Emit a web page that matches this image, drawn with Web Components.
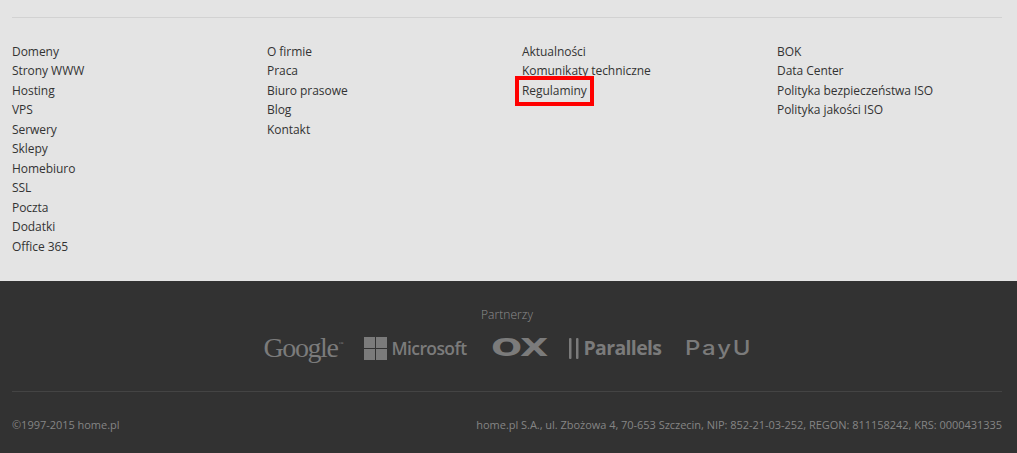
<!DOCTYPE html>
<html lang="pl"><head><meta charset="utf-8"><title>home.pl</title>
<style>html,body{margin:0;padding:0;background:#e4e4e4;font-family:"Open Sans","Liberation Sans",sans-serif;}</style>
</head><body>
<site-sitemap>
  <link-column><a>Domeny</a><a>Strony WWW</a><a>Hosting</a><a>VPS</a><a>Serwery</a><a>Sklepy</a><a>Homebiuro</a><a>SSL</a><a>Poczta</a><a>Dodatki</a><a>Office 365</a></link-column>
  <link-column><a>O firmie</a><a>Praca</a><a>Biuro prasowe</a><a>Blog</a><a>Kontakt</a></link-column>
  <link-column><a>Aktualności</a><a>Komunikaty techniczne</a><a class="hl">Regulaminy</a></link-column>
  <link-column><a>BOK</a><a>Data Center</a><a>Polityka bezpieczeństwa ISO</a><a>Polityka jakości ISO</a></link-column>
</site-sitemap>
<site-footer>
  <span slot="copy">©1997-2015 home.pl</span>
  <span slot="info">home.pl S.A., ul. Zbożowa 4, 70-653 Szczecin, NIP: 852-21-03-252, REGON: 811158242, KRS: 0000431335</span>
</site-footer>
<script>
class SiteSitemap extends HTMLElement{constructor(){super();this.attachShadow({mode:'open'}).innerHTML=`
<style>
:host{display:block;box-sizing:border-box;height:281px;padding:17px 15px 0 12px;background:#e4e4e4}
.rule{height:1px;background:#d2d2d2}
.cols{display:grid;grid-template-columns:255px 255px 255px 1fr;padding-top:23.6px}
</style><div class="rule"></div><div class="cols"><slot></slot></div>`;}}
class LinkColumn extends HTMLElement{constructor(){super();
const s=this.attachShadow({mode:'open'});
s.innerHTML=`<style>
:host{display:flex;flex-direction:column;align-items:flex-start;font:12px/19.5px "Open Sans","Liberation Sans",sans-serif;letter-spacing:-.05px;color:#333}
a{display:block;position:relative;white-space:nowrap}
a.hl::after{content:"";position:absolute;left:-7px;right:-7px;top:-5px;bottom:-5.5px;border:4px solid #f00;box-sizing:border-box}
</style>`;
[...this.children].forEach(c=>{const a=document.createElement('a');a.textContent=c.textContent;a.className=c.className;s.appendChild(a);});
}}
class PartnerLogos extends HTMLElement{constructor(){super();this.attachShadow({mode:'open'}).innerHTML=`
<style>
:host{display:flex;align-items:center;justify-content:center;height:40px;padding-right:2px;color:#7b7b7b;white-space:nowrap}
.item{display:flex;align-items:center;flex:none}
.google{font:28px/40px "Liberation Serif",serif;letter-spacing:-1.4px;width:79px;margin-right:21px}
.google sup{font-size:5px;line-height:1;align-self:flex-start;margin-top:13px;margin-left:1px;letter-spacing:0}
.ms{width:103px;margin-right:24px;gap:5px}
.ms span{font:600 17.5px/40px "Open Sans",sans-serif;letter-spacing:-.6px}
.ms svg{display:block}
.ox{font:900 36px/40px "DejaVu Sans",sans-serif;margin-right:22px;width:56px;letter-spacing:-1px}
.ox i{display:inline-block;font-style:normal;transform:scale(1.02,.68);transform-origin:left center}
.par{width:93px;margin-right:23px;gap:5px}
.par span{font:700 19.5px/40px "Open Sans",sans-serif;letter-spacing:-.65px}
.par svg{display:block}
.payu{font:500 20px/40px "Inter",sans-serif;width:64px}
.payu i{display:inline-block;font-style:normal;letter-spacing:1.5px;transform:scaleX(1.2);transform-origin:left center}
</style>
<div class="item google">Google<sup>™</sup></div>
<div class="item ms"><svg width="23" height="23" viewBox="0 0 23 23" fill="#7b7b7b"><rect width="11" height="11"/><rect x="12" width="11" height="11"/><rect y="12" width="11" height="11"/><rect x="12" y="12" width="11" height="11"/></svg><span>Microsoft</span></div>
<div class="item ox"><i>OX</i></div>
<div class="item par"><svg width="10" height="21" viewBox="0 0 10 21" fill="#7b7b7b"><rect width="2.5" height="21" rx="1"/><rect x="7" width="2.5" height="21" rx="1"/></svg><span>Parallels</span></div>
<div class="item payu"><i>PayU</i></div>`;}}
class SiteFooter extends HTMLElement{constructor(){super();this.attachShadow({mode:'open'}).innerHTML=`
<style>
:host{display:block;box-sizing:border-box;height:172px;background:#323232;padding:25px 15px 0 12px;font:11px/18px "Open Sans","Liberation Sans",sans-serif;color:#858585;letter-spacing:-.03px}
.title{text-align:center;height:18px;font-size:12px;font-weight:300;color:#8f8f8f;letter-spacing:.05px}
partner-logos{margin-top:4px}
.rule{height:1px;background:#444;margin-top:23px}
.bottom{display:flex;justify-content:space-between;padding-top:24px}
</style>
<div class="title">Partnerzy</div>
<partner-logos></partner-logos>
<div class="rule"></div>
<div class="bottom"><slot name="copy"></slot><slot name="info"></slot></div>`;}}
customElements.define('link-column',LinkColumn);
customElements.define('site-sitemap',SiteSitemap);
customElements.define('partner-logos',PartnerLogos);
customElements.define('site-footer',SiteFooter);
</script>
</body></html>
